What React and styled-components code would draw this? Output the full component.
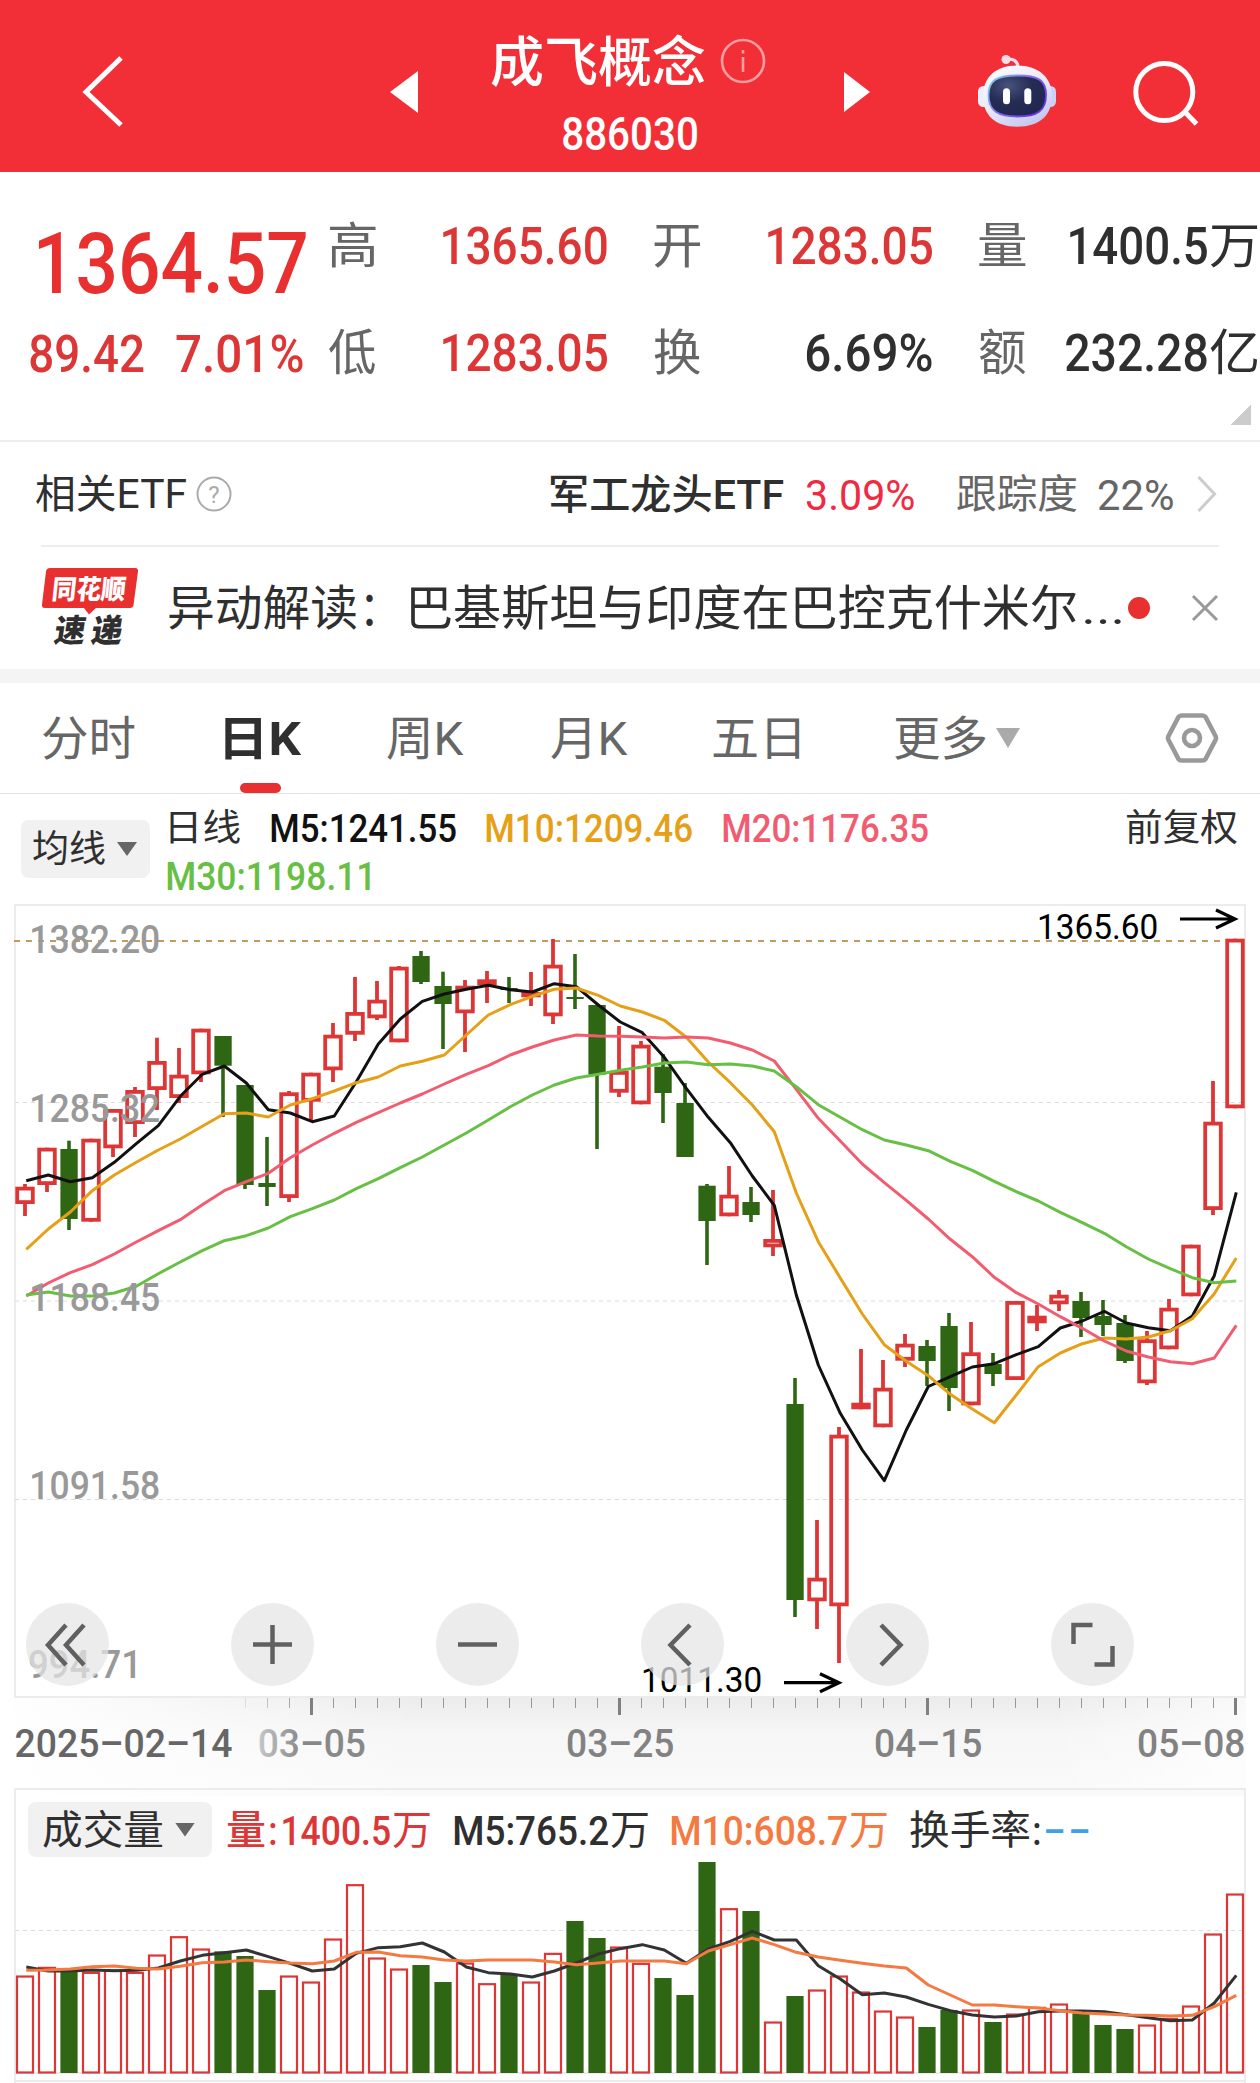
import React from "react";
import styled, { createGlobalStyle } from "styled-components";

const FAMILY = 'Roboto, "Noto Sans CJK SC", sans-serif';
const CJK = '"Noto Sans CJK SC", Roboto, sans-serif';

const Global = createGlobalStyle`
  body { margin: 0; background: #fff; font-family: ${FAMILY}; }
  * { box-sizing: border-box; }
  svg { display: block; flex: none; }
`;

/* ---------- text fitted to a known width ---------- */

const canvas = document.createElement("canvas");
function measure(text, size, weight, family, width) {
  const ctx = canvas.getContext("2d");
  ctx.font = `${weight} ${size}px ${family}`;
  const m = ctx.measureText(text);
  const left = m.actualBoundingBoxLeft;
  const scale = width / (left + m.actualBoundingBoxRight);
  return { scale, shift: left * scale };
}

const FitBox = styled.span`
  display: block;
  flex: none;
  width: ${(p) => p.$w}px;
  height: ${(p) => p.$h}px;
  margin-left: ${(p) => p.$ml || 0}px;
  font-family: ${(p) => p.$family};
  font-size: ${(p) => p.$size}px;
  font-weight: ${(p) => p.$weight};
  line-height: ${(p) => p.$h}px;
  color: ${(p) => p.$color || "inherit"};
  white-space: nowrap;
`;
const FitInner = styled.span`
  display: inline-block;
  vertical-align: top;
  transform-origin: 0 50%;
  white-space: pre;
`;

function Fit({ children, w, size, weight = 400, color, ml, h = 60, dy = 1.3 }) {
  const { scale, shift } = measure(children, size, weight, FAMILY, w);
  return (
    <FitBox $w={w} $h={h} $ml={ml} $size={size} $weight={weight} $color={color} $family={FAMILY}>
      <FitInner style={{ transform: `translate(${shift}px, ${dy}px) scaleX(${scale})` }}>{children}</FitInner>
    </FitBox>
  );
}

function SvgFit({ x, y, w, size, weight = 400, fill, children, family = FAMILY }) {
  const { scale, shift } = measure(children, size, weight, family, w);
  return (
    <text
      transform={`translate(${x + shift} ${y}) scale(${scale} 1)`}
      fontFamily={family}
      fontSize={size}
      fontWeight={weight}
      fill={fill}
    >
      {children}
    </text>
  );
}

/* ---------- page parts ---------- */

const Page = styled.main`
  width: 1260px;
  height: 2083px;
  overflow: hidden;
  background: #fff;
  color: #2f2f2f;
`;

const Header = styled.header`
  display: flex;
  align-items: center;
  height: 172px;
  padding: 12px 0 0 80px;
  background: #f22f37;
  color: #fff;
`;
const Slot = styled.div`
  flex: none;
  margin-left: ${(p) => p.$ml || 0}px;
`;
const TitleBlock = styled.div`
  width: 426px;
  padding-left: 73px;
`;
const TitleRow = styled.div`
  display: flex;
  align-items: center;
  gap: 15px;
  height: 60px;
`;
const CodeRow = styled.div`
  padding: 22px 0 0 72px;
`;

const Quote = styled.section`
  height: 270px;
  border-bottom: 2px solid #ededed;
`;
const QuoteBody = styled.div`
  display: flex;
  height: 233px;
`;
const PriceCol = styled.div`
  width: 329px;
  padding: 51px 0 0 30px;
`;
const PriceRow = styled.div`
  display: flex;
  height: ${(p) => p.$h}px;
  padding-left: ${(p) => p.$pl || 0}px;
`;
const StatGrid = styled.div`
  display: grid;
  grid-template-columns: repeat(3, 279px);
  grid-auto-rows: 60px;
  gap: 47px 46px;
  padding-top: 44px;
`;
const Stat = styled.div`
  display: flex;
  justify-content: space-between;
`;
const StatValue = styled.div`
  display: flex;
  margin-right: 1px;
`;
const Corner = styled.div`
  width: 20px;
  height: 20px;
  margin-left: 1231px;
  background: linear-gradient(135deg, transparent 50%, #ccc 50%);
`;

const EtfRow = styled.section`
  display: flex;
  align-items: center;
  height: 103px;
  padding: 0 43px 0 36px;
`;
const Divider = styled.div`
  height: 2px;
  margin: 0 41px;
  background: #eeeeee;
`;
const Grow = styled.div`
  flex: 1;
`;
const NewsRow = styled.section`
  display: flex;
  align-items: center;
  height: 122px;
  padding-left: 40px;
`;
const Dot = styled.span`
  width: 22px;
  height: 22px;
  margin-left: 6px;
  border-radius: 50%;
  background: #e83030;
`;
const Band = styled.div`
  height: 14px;
  background: #f4f4f4;
`;

const Tabs = styled.nav`
  display: flex;
  align-items: center;
  height: 111px;
  border-bottom: 1px solid #e2e2e2;
`;
const Tab = styled.div`
  position: relative;
  display: flex;
  align-items: center;
  height: 110px;
  margin-left: ${(p) => p.$ml}px;
  color: ${(p) => (p.$on ? "#2f2f2f" : "#666")};
  &::after {
    content: "";
    display: ${(p) => (p.$on ? "block" : "none")};
    position: absolute;
    left: 15px;
    bottom: 0;
    width: 41px;
    height: 10px;
    border-radius: 5px;
    background: #e83030;
  }
`;
const Caret = styled.span`
  flex: none;
  width: ${(p) => p.$w}px;
  height: ${(p) => p.$h}px;
  margin-left: ${(p) => p.$ml}px;
  background: ${(p) => p.$color};
  clip-path: polygon(0 0, 100% 0, 50% 100%);
`;

const MaBar = styled.section`
  display: flex;
  height: 110px;
  padding: 10px 0 0 21px;
`;
const Picker = styled.div`
  display: flex;
  align-items: center;
  flex: none;
  width: ${(p) => p.$w}px;
  height: ${(p) => p.$h}px;
  margin-top: ${(p) => p.$mt || 0}px;
  border-radius: 8px;
  background: #f1f1f1;
`;
const Legend = styled.div`
  width: 976px;
  padding-left: 17px;
`;
const LegendRow = styled.div`
  display: flex;
  height: 48px;
`;

const ChartBox = styled.section`
  position: relative;
  height: 794px;
`;
const Tools = styled.div`
  position: absolute;
  left: 26px;
  bottom: 12px;
  display: flex;
  gap: 122px;
`;
const Tool = styled.button`
  display: flex;
  align-items: center;
  justify-content: center;
  width: 83px;
  height: 83px;
  padding: 0;
  border: 0;
  border-radius: 50%;
  background: rgba(229, 229, 229, 0.725);
`;
const Axis = styled.section`
  height: 90px;
  margin-right: 14px;
  background: linear-gradient(90deg, #fff 0, rgba(255, 255, 255, 0) 420px, rgba(255, 255, 255, 0) 1050px, rgba(255, 255, 255, 0.7) 100%),
    linear-gradient(#ececec, #f6f6f6 40%, #fafafa);
`;

const VolumeBox = styled.section`
  height: 295px;
  margin: 0 14px;
  border: 2px solid #ececec;
  border-bottom: 0;
  background: linear-gradient(90deg, #fff, rgba(255, 255, 255, 0) 420px), linear-gradient(#fafafa 6px, #fff 6px);
`;
const VolumeHead = styled.div`
  display: flex;
  align-items: center;
  height: 72px;
  padding: 7px 0 0 12px;
`;

/* ---------- data (vertical positions on the plot) ---------- */

const X0 = 25;
const STEP = 22;

// up flag, high, body top, body bottom, low
const CANDLES = [
  [1, 1184, 1186.7, 1204, 1216], [1, 1147.7, 1147.7, 1185, 1192], [0, 1140.7, 1149, 1219, 1230], [1, 1138.7, 1138.7, 1221.7, 1221.7],
  [1, 1109, 1109, 1148.3, 1157], [1, 1087, 1090, 1124, 1137], [1, 1037.7, 1061, 1090, 1110], [1, 1048, 1074.7, 1098, 1103],
  [1, 1028.7, 1028.7, 1074.3, 1082], [0, 1036, 1036, 1065.7, 1117], [0, 1085, 1085, 1185, 1189], [0, 1137, 1183, 1187, 1206],
  [1, 1091, 1092.3, 1198, 1202], [1, 1072.7, 1072.7, 1101.7, 1121], [1, 1023, 1034.7, 1070.3, 1082], [1, 977, 1012, 1034.7, 1041],
  [1, 981, 999.7, 1018.3, 1020], [1, 966, 966.7, 1042.3, 1042.3], [0, 951, 956, 982, 984], [0, 971.7, 986, 1004, 1049],
  [1, 980, 985.7, 1013.3, 1052], [1, 971, 979.3, 985, 1003], [0, 977, 988, 990, 1003], [1, 972, 992, 997.3, 1006],
  [1, 939, 964.7, 1016.3, 1024], [0, 954, 997, 999, 1009], [0, 1005, 1005, 1074.7, 1149], [1, 1026, 1071, 1092.7, 1097],
  [1, 1041, 1044.7, 1104.3, 1104.3], [0, 1054, 1066.7, 1093, 1123], [0, 1083, 1103, 1157, 1157], [0, 1184, 1185.7, 1221, 1265],
  [1, 1166, 1194.7, 1216.3, 1216.3], [0, 1187, 1202, 1215, 1222], [1, 1190, 1239, 1247.3, 1256], [0, 1378, 1404, 1600, 1617],
  [1, 1520, 1577.7, 1601.3, 1629], [1, 1427, 1434.7, 1606.3, 1663], [1, 1349, 1402.7, 1409.3, 1409.3], [1, 1360, 1387.7, 1427.3, 1427.3],
  [1, 1334, 1343.7, 1360.7, 1367], [0, 1340, 1346, 1361, 1386], [0, 1313, 1326, 1388, 1411], [1, 1322, 1352.3, 1405.3, 1405.3],
  [0, 1353, 1364, 1374, 1386], [1, 1301, 1301, 1380, 1380], [1, 1305, 1315.7, 1323.3, 1331], [1, 1290, 1294.7, 1304.3, 1311],
  [0, 1292, 1301, 1318, 1337], [0, 1300, 1316, 1325, 1336], [0, 1315, 1323, 1361, 1363], [1, 1331, 1339.3, 1383.3, 1385],
  [1, 1299, 1307.7, 1349.3, 1349.3], [1, 1244.7, 1244.7, 1296.3, 1296.3], [1, 1081, 1121.7, 1210, 1215], [1, 938.7, 938.7, 1108.3, 1108.3],
];

const M5 = [1180.7, 1175, 1181.7, 1177.7, 1162.3, 1143.7, 1125.7, 1096.3, 1074.3, 1066, 1083, 1109.7, 1113, 1121.7, 1116, 1081.7, 1044, 1019, 1001.3, 994, 989.3, 985.3, 989.7, 992, 983.7, 986.7, 1005, 1022, 1032.7, 1057.3, 1088.3, 1117.3, 1142.7, 1176, 1205.3, 1295, 1365, 1413.3, 1450, 1480.7, 1430, 1386.5, 1376.7, 1367, 1363.7, 1354.7, 1346.7, 1328, 1321, 1311.3, 1323, 1327.7, 1330.7, 1316, 1275.7, 1192.3];
const M10 = [1249.3, 1229, 1212, 1190.7, 1175, 1162.3, 1150, 1139, 1126.3, 1113.7, 1113, 1117, 1105, 1098.7, 1091, 1082.7, 1077, 1066, 1061.3, 1055, 1035, 1015, 1004.7, 996.3, 989.3, 988, 995.3, 1006, 1012, 1020.3, 1037.3, 1062, 1082.7, 1105, 1131.7, 1193, 1241.7, 1278, 1314, 1344.7, 1361.3, 1375.7, 1394.3, 1409, 1422.7, 1395, 1366.7, 1353, 1343.7, 1338, 1339, 1337, 1330.7, 1318.7, 1293.7, 1258];
const M20 = [1296, 1283, 1272.7, 1264.7, 1254, 1242, 1230.7, 1219.7, 1204.7, 1190.7, 1181.7, 1173.3, 1157.7, 1145, 1133.3, 1122.3, 1112.7, 1103, 1094, 1084, 1074.3, 1065.7, 1055, 1047, 1040, 1035, 1036, 1036.3, 1037, 1038, 1037, 1038, 1043, 1050, 1061, 1089.3, 1118.3, 1141, 1164, 1182.7, 1200.3, 1219, 1239.3, 1256.7, 1277.3, 1292.7, 1304, 1316.7, 1328.3, 1341, 1351, 1357, 1361.7, 1363.7, 1358, 1325.3];
const M30 = [1295, 1292, 1296, 1296, 1293, 1286.3, 1273.7, 1262, 1250.7, 1240.7, 1235.7, 1228, 1216.7, 1208.7, 1200, 1188.7, 1178.7, 1167.7, 1157, 1145, 1133, 1120, 1106.7, 1095, 1085, 1078, 1074.3, 1070.3, 1067, 1063, 1062, 1064.7, 1064, 1066, 1071, 1086.7, 1104.7, 1117.3, 1129.7, 1140, 1145, 1150.7, 1161.3, 1170.3, 1181.3, 1191.7, 1201, 1212.3, 1222.7, 1233.3, 1246.7, 1259, 1268.7, 1277.7, 1282.7, 1281];

// volume plot values are in thirds of a pixel below y = 1780
const VOL = [586, 560, 575, 575, 568, 575, 523, 468, 505, 514, 528, 630, 586, 604, 475, 312, 532, 565, 555, 606, 547, 609, 585, 604, 518, 423, 474, 499, 548, 594, 645, 246, 384, 393, 724, 648, 628, 586, 634, 691, 709, 741, 690, 688, 726, 700, 680, 670, 700, 735, 747, 733, 713, 676, 460, 340];
const VOL_DOWN = new Set([2, 9, 10, 11, 18, 19, 22, 25, 26, 29, 30, 31, 33, 35, 41, 42, 44, 48, 49, 50]);
const V5 = [561, 573, 573, 570, 572, 571, 564, 543, 526, 518, 510, 530, 550, 573, 567, 520, 503, 500, 489, 516, 561, 578, 582, 591, 573, 549, 522, 506, 494, 510, 550, 507, 484, 454, 480, 480, 557, 597, 644, 639, 651, 673, 692, 705, 711, 708, 695, 693, 693, 695, 704, 713, 722, 720, 669, 586];
const V10 = [571, 570, 567, 560, 558, 565, 567, 559, 548, 546, 540, 545, 549, 551, 543, 517, 516, 527, 531, 540, 543, 540, 540, 540, 546, 554, 549, 543, 543, 543, 551, 513, 494, 474, 494, 517, 531, 541, 550, 558, 564, 615, 645, 675, 675, 680, 684, 692, 699, 702, 705, 706, 708, 706, 680, 646];

const RED = "#dd3636";
const GREEN = "#2f6614";
const vy = (v) => 1780 + v / 3;
const points = (values, map = (v) => v) => values.map((v, i) => `${X0 + 1.3 + STEP * i},${map(v)}`).join(" ");

function Series({ values, color, map }) {
  return <polyline points={points(values, map)} fill="none" stroke={color} strokeWidth="3" strokeLinejoin="round" />;
}

function Candle({ i, d }) {
  const [up, high, top, bottom, low] = d;
  const x = X0 + STEP * i;
  if (!up) {
    return (
      <g fill={GREEN}>
        <rect x={x - 1.8} y={high} width="3.6" height={low - high} />
        <rect x={x - 8.6} y={top} width="17.3" height={bottom - top} />
      </g>
    );
  }
  return (
    <g fill={RED}>
      <rect x={x - 1.9} y={high} width="3.8" height={top - high + 1} />
      <rect x={x - 1.9} y={bottom - 1} width="3.8" height={Math.max(0, low - bottom + 1)} />
      <rect x={x - 7.8} y={top + 1.9} width="15.6" height={Math.max(0.5, bottom - top - 3.8)} fill="none" stroke={RED} strokeWidth="3.8" />
    </g>
  );
}

function Arrow({ x, y }) {
  return <path d={`M${x} ${y}H${x + 54}M${x + 36} ${y - 9}L${x + 55} ${y}L${x + 36} ${y + 9}`} fill="none" stroke="#000" strokeWidth="3.2" />;
}

const LEVELS = [
  ["1382.20", 32, 952.7, 127], ["1285.32", 32, 1121.7, 127], ["1188.45", 32, 1311, 127],
  ["1091.58", 32, 1499, 127], ["994.71", 29, 1678, 106],
];

function PriceChart() {
  return (
    <svg width="1260" height="794" viewBox="0 904 1260 794">
      <rect x="15" y="905" width="1230" height="792" fill="none" stroke="#ececec" strokeWidth="2" />
      {[1102.5, 1301, 1499.5].map((y) => (
        <path key={y} d={`M15 ${y}H1244`} stroke="#dcdcdc" strokeWidth="1.2" strokeDasharray="4 4" />
      ))}
      <path d="M14 941H1226" stroke="#c49a62" strokeWidth="1.8" strokeDasharray="6 6" />
      {CANDLES.map((d, i) => <Candle key={i} i={i} d={d} />)}
      <Series values={M5} color="#111" />
      <Series values={M10} color="#e6a017" />
      <Series values={M20} color="#f25c70" />
      <Series values={M30} color="#67bf44" />
      {LEVELS.map(([t, x, y, w]) => (
        <SvgFit key={t} x={x} y={y} w={w} size={39.5} weight={500} fill="#999">{t}</SvgFit>
      ))}
      <SvgFit x={1039} y={939} w={118} size={34.5} fill="#000">1365.60</SvgFit>
      <Arrow x={1180} y={919} />
      <SvgFit x={643} y={1691.7} w={118} size={34.5} fill="#000">1011.30</SvgFit>
      <Arrow x={784} y={1682.7} />
    </svg>
  );
}

const TICKS = Array.from({ length: 46 }, (_, k) => k + 10);

function DateAxis() {
  return (
    <svg width="1246" height="90" viewBox="0 1698 1246 90">
      <defs>
        <linearGradient id="fade" x1="0" x2="1" y1="0" y2="0">
          <stop offset="0" stopColor="#c8c8c8" />
          <stop offset="0.4" stopColor="#888" />
        </linearGradient>
      </defs>
      {TICKS.map((i) => {
        const major = (i - 13) % 14 === 0;
        return (
          <rect
            key={i}
            x={X0 + STEP * i + (major ? -1 : 0)}
            y="1698"
            width={major ? 3 : 1}
            height={major ? 17 : 10}
            fill={major ? "#808080" : "#999"}
            opacity={i < 13 ? (i - 9) * 0.28 : 1}
          />
        );
      })}
      <SvgFit x={15.5} y={1757.3} w={216.5} size={39.5} weight={500} fill="#666">2025–02–14</SvgFit>
      <SvgFit x={259.6} y={1757.3} w={105} size={39.5} weight={500} fill="url(#fade)">03–05</SvgFit>
      <SvgFit x={568} y={1757.3} w={105} size={39.5} weight={500} fill="#828282">03–25</SvgFit>
      <SvgFit x={876} y={1757.3} w={105} size={39.5} weight={500} fill="#828282">04–15</SvgFit>
      <SvgFit x={1139} y={1757.3} w={105} size={39.5} weight={500} fill="#828282">05–08</SvgFit>
    </svg>
  );
}

function VolumeChart() {
  return (
    <svg width="1228" height="221" viewBox="16 1862 1228 221" overflow="visible">
      <path d="M15 1930.5H1244" stroke="#dcdcdc" strokeWidth="1.2" strokeDasharray="4 4" />
      <path d="M15 2073H1244" stroke="#ececec" strokeWidth="2" />
      {VOL.map((v, i) => {
        const x = X0 + STEP * i;
        return VOL_DOWN.has(i) ? (
          <rect key={i} x={x - 8.6} y={vy(v)} width="17.2" height={2073 - vy(v)} fill={GREEN} />
        ) : (
          <rect key={i} x={x - 8} y={vy(v) + 1.2} width="16" height={2072.5 - vy(v) - 1.2} fill="none" stroke={RED} strokeWidth="2.2" />
        );
      })}
      <Series values={V5} color="#333" map={vy} />
      <Series values={V10} color="#f47a42" map={vy} />
      <path d="M15 2081H1244" stroke="#ececec" strokeWidth="2" />
    </svg>
  );
}

/* ---------- icons ---------- */

function Robot() {
  return (
    <svg width="80" height="76" viewBox="977 54 80 76">
      <defs>
        <linearGradient id="shell" x1="0" y1="0" x2="0.6" y2="1">
          <stop offset="0" stopColor="#fff" />
          <stop offset="0.6" stopColor="#e6e8f8" />
          <stop offset="1" stopColor="#c6c9ee" />
        </linearGradient>
        <linearGradient id="rim" x1="0" y1="0" x2="1" y2="0.6">
          <stop offset="0" stopColor="#7fd8ea" />
          <stop offset="0.5" stopColor="#8a6ff0" />
          <stop offset="1" stopColor="#6a35e0" />
        </linearGradient>
        <radialGradient id="visor" cx="0.35" cy="0.25" r="0.8">
          <stop offset="0" stopColor="#48527c" />
          <stop offset="0.5" stopColor="#252d55" />
          <stop offset="1" stopColor="#1f2750" />
        </radialGradient>
      </defs>
      <path d="M1006 59.5C1013 58 1017.500 61 1018 67" fill="none" stroke="#f1dff0" strokeWidth="3.2" />
      <circle cx="1006" cy="59.500" r="4.500" fill="#f8dce6" />
      <rect x="978" y="86" width="12" height="21" rx="5.500" fill="#eceefb" />
      <rect x="1044" y="86" width="12" height="21" rx="5.500" fill="#cfd0f2" />
      <path d="M1017 65.500C1039 65.500 1052 78 1052 96C1052 115 1040 126.700 1017 126.700C995 126.700 983 115 983 96C983 78 995 65.500 1017 65.500Z" fill="url(#shell)" />
      <path d="M1017.500 75.500C1038 75.500 1046 80 1046 95C1046 111 1037 116.500 1017.500 116.500C998 116.500 988.500 111 988.500 95C988.500 80 997 75.500 1017.500 75.500Z" fill="url(#visor)" stroke="url(#rim)" strokeWidth="1.800" />
      <rect x="1003" y="88.300" width="7" height="16" rx="3.500" fill="#fff" />
      <rect x="1024.300" y="88.300" width="7" height="16" rx="3.500" fill="#fff" />
    </svg>
  );
}

function BrandLogo() {
  return (
    <svg width="100" height="96" viewBox="40 560 100 96">
      <path d="M50 568H135Q138.500 568 138 571.500L133.500 605Q133 608 130 608H96L89 614.500L84 608H45Q41.500 608 42 604.500L46 571.500Q46.500 568 50 568Z" fill="#e83030" />
      <g transform="translate(52 599) skewX(-6)">
        <SvgFit x={0} y={0} w={73} size={27} weight={900} fill="#fff" family={CJK}>同花顺</SvgFit>
      </g>
      <g transform="translate(53 641.5) skewX(-9)">
        <SvgFit x={0} y={0} w={31} size={32} weight={900} fill="#2f2f2f" family={CJK}>速</SvgFit>
        <SvgFit x={37} y={0} w={31} size={32} weight={900} fill="#2f2f2f" family={CJK}>递</SvgFit>
      </g>
    </svg>
  );
}

const TOOL_PATHS = [
  "M40 22L22 42L40 62M58 22L40 42L58 62",
  "M22 41.500H61M41.500 22V61",
  "M22 41.500H61",
  "M49 22L29.500 42L49 62",
  "M35 22L54.500 42L35 62",
  "M41.500 22H22.500V41M61.500 43V61.500H43.500",
];

/* ---------- data-driven rows ---------- */

const STATS = [
  ["高", "1365.60", 164, RED], ["开", "1283.05", 164, RED], ["量", "1400.5", 137, null, "万"],
  ["低", "1283.05", 164, RED], ["换", "6.69%", 126, null], ["额", "232.28", 141, null, "亿"],
];

const TABS = [
  ["分时", 43, 92], ["日K", 90, 77, true], ["周K", 85, 77], ["月K", 87, 77], ["五日", 85, 87],
];

export default function App() {
  return (
    <Page>
      <Global />
      <Header>
        <svg width="46" height="76" viewBox="80 54 46 76">
          <path d="M121 58L86 92L121 125" fill="none" stroke="#fff" strokeWidth="5" />
        </svg>
        <Slot $ml={264}>
          <svg width="28" height="42" viewBox="0 0 28 42"><path d="M0 21L28 0V42Z" fill="#fff" /></svg>
        </Slot>
        <TitleBlock>
          <TitleRow>
            <Fit w={214} size={54} weight={500} dy={3}>成飞概念</Fit>
            <svg width="46" height="46" viewBox="0 0 46 46" fill="none" stroke="#ff9ea3" strokeWidth="2.600">
              <circle cx="23" cy="23" r="21" />
              <path d="M23 19V34M23 12V15.500" />
            </svg>
          </TitleRow>
          <CodeRow><Fit w={134} size={46} weight={500} h={40} dy={0.5}>886030</Fit></CodeRow>
        </TitleBlock>
        <svg width="26" height="40" viewBox="0 0 26 40"><path d="M26 20L0 0V40Z" fill="#fff" /></svg>
        <Slot $ml={107}><Robot /></Slot>
        <Slot $ml={74}>
          <svg width="70" height="70" viewBox="1131 57 70 70" fill="none" stroke="#fff" strokeWidth="5">
            <circle cx="1164.300" cy="92" r="28.500" />
            <path d="M1184.500 111.500L1196.500 124" />
          </svg>
        </Slot>
      </Header>

      <Quote>
        <QuoteBody>
          <PriceCol>
            <PriceRow $h={101} $pl={9}><Fit w={267} size={85} weight={500} h={80} color="#e83030">1364.57</Fit></PriceRow>
            <PriceRow $h={60}>
              <Fit w={114} size={51} weight={500} color={RED}>89.42</Fit>
              <Fit w={127} ml={32} size={51} weight={500} color={RED}>7.01%</Fit>
            </PriceRow>
          </PriceCol>
          <StatGrid>
            {STATS.map(([label, value, w, color, unit]) => (
              <Stat key={label + value}>
                <Fit w={46.500} size={49} color="#666">{label}</Fit>
                <StatValue>
                  <Fit w={w} size={51} weight={500} color={color}>{value}</Fit>
                  {unit && <Fit w={47} ml={3} size={49}>{unit}</Fit>}
                </StatValue>
              </Stat>
            ))}
          </StatGrid>
        </QuoteBody>
        <Corner />
      </Quote>

      <EtfRow>
        <Fit w={150} size={40}>相关ETF</Fit>
        <Slot $ml={10}>
          <svg width="36" height="36" viewBox="0 0 36 36">
            <circle cx="18" cy="18" r="16.500" fill="none" stroke="#aaa" strokeWidth="2" />
            <text x="18" y="26.500" fontSize="24" fontFamily="Roboto" fill="#aaa" textAnchor="middle">?</text>
          </svg>
        </Slot>
        <Grow />
        <Fit w={233.500} size={41} weight={500}>军工龙头ETF</Fit>
        <Fit w={107} ml={23.500} size={43} color="#f02a43" dy={0.5}>3.09%</Fit>
        <Fit w={120} ml={43} size={40} color="#666">跟踪度</Fit>
        <Fit w={75} ml={21} size={43} color="#666" dy={0.5}>22%</Fit>
        <Slot $ml={24}>
          <svg width="20" height="38" viewBox="0 0 20 38"><path d="M1.500 2L17.500 19L1.500 36" fill="none" stroke="#ccc" strokeWidth="3" /></svg>
        </Slot>
      </EtfRow>
      <Divider />
      <NewsRow>
        <BrandLogo />
        <Fit w={188} ml={29} size={48} dy={1}>异动解读</Fit>
        <Fit w={7} ml={9} size={48} dy={1}>：</Fit>
        <Fit w={665} ml={38} size={48} dy={1}>巴基斯坦与印度在巴控克什米尔</Fit>
        <Fit w={37} ml={9} size={44} dy={1}>...</Fit>
        <Dot />
        <Slot $ml={41}>
          <svg width="28" height="28" viewBox="0 0 28 28"><path d="M2 2L26 26M26 2L2 26" stroke="#999" strokeWidth="3" /></svg>
        </Slot>
      </NewsRow>
      <Band />

      <Tabs>
        {TABS.map(([t, ml, w, on]) => (
          <Tab key={t} $ml={ml} $on={on}><Fit w={w} size={47} weight={on ? 700 : 400}>{t}</Fit></Tab>
        ))}
        <Tab $ml={95}>
          <Fit w={91} size={47}>更多</Fit>
          <Caret $w={24} $h={20} $ml={10} $color="#aaa" />
        </Tab>
        <Slot $ml={145}>
          <svg width="54" height="52" viewBox="0 0 54 52" fill="none" stroke="#999" strokeWidth="4.600">
            <path d="M16.500 3.500H37.500Q39.500 3.500 40.500 5L50.500 24Q51.500 26 50.500 28L40.500 47Q39.500 48.500 37.500 48.500H16.500Q14.500 48.500 13.500 47L3.500 28Q2.500 26 3.500 24L13.500 5Q14.500 3.500 16.500 3.500Z" />
            <circle cx="27" cy="26" r="8" />
          </svg>
        </Slot>
      </Tabs>

      <MaBar>
        <Picker $w={129} $h={58} $mt={16}>
          <Fit w={72} ml={12} size={37}>均线</Fit>
          <Caret $w={20} $h={14} $ml={12} $color="#666" />
        </Picker>
        <Legend>
          <LegendRow>
            <Fit h={48} w={70} ml={3} size={37}>日线</Fit>
            <Fit h={48} w={185} ml={31} size={39} weight={500} color="#111">M5:1241.55</Fit>
            <Fit h={48} w={206} ml={30} size={39} weight={500} color="#e6a017">M10:1209.46</Fit>
            <Fit h={48} w={205} ml={31} size={39} weight={500} color="#f25c70">M20:1176.35</Fit>
          </LegendRow>
          <LegendRow>
            <Fit h={48} w={203} size={39} weight={500} color="#67bf44">M30:1198.11</Fit>
          </LegendRow>
        </Legend>
        <Fit h={48} w={111} size={37}>前复权</Fit>
      </MaBar>

      <ChartBox>
        <PriceChart />
        <Tools>
          {TOOL_PATHS.map((d) => (
            <Tool key={d}>
              <svg width="83" height="83" viewBox="0 0 83 83"><path d={d} fill="none" stroke="#606060" strokeWidth="4.500" /></svg>
            </Tool>
          ))}
        </Tools>
      </ChartBox>
      <Axis><DateAxis /></Axis>

      <VolumeBox>
        <VolumeHead>
          <Picker $w={184} $h={55}>
            <Fit w={120} ml={15} size={40}>成交量</Fit>
            <Caret $w={20} $h={14} $ml={12} $color="#666" />
          </Picker>
          <Fit w={38} ml={15} size={40} weight={500} color={RED}>量</Fit>
          <Fit w={6} ml={5} size={41} weight={500} color={RED}>:</Fit>
          <Fit w={107} ml={7} size={41} weight={500} color={RED}>1400.5</Fit>
          <Fit w={37} ml={3} size={40} color={RED}>万</Fit>
          <Fit w={154} ml={24} size={41} weight={500}>M5:765.2</Fit>
          <Fit w={37} ml={3} size={40}>万</Fit>
          <Fit w={176} ml={23} size={41} weight={500} color="#f47a42">M10:608.7</Fit>
          <Fit w={37} ml={3} size={40} color="#f47a42">万</Fit>
          <Fit w={119} ml={22.500} size={40}>换手率</Fit>
          <Fit w={6} ml={5} size={41} weight={500}>:</Fit>
          <Fit w={17.500} ml={6} size={41} weight={500} color="#3fa0e8">–</Fit>
          <Fit w={17.500} ml={8} size={41} weight={500} color="#3fa0e8">–</Fit>
        </VolumeHead>
        <VolumeChart />
      </VolumeBox>
    </Page>
  );
}
